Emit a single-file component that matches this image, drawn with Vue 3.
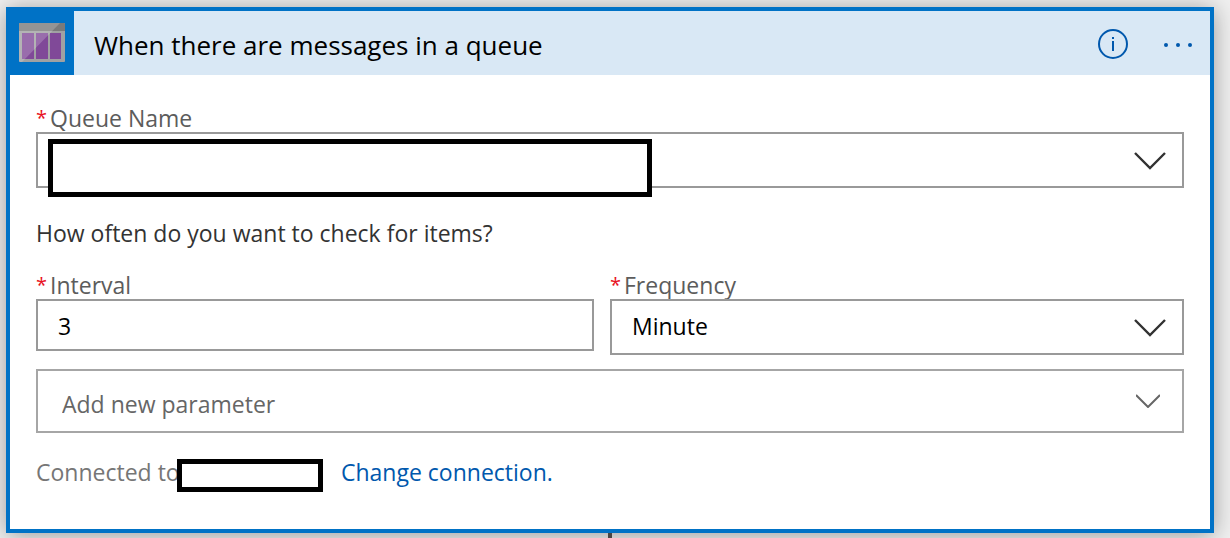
<script setup>
import { ref } from 'vue'

const queue = ref('')
const interval = ref('3')
const frequency = ref('Minute')
const parameter = ref('')
const frequencies = ['Month', 'Week', 'Day', 'Hour', 'Minute', 'Second']
</script>

<template>
  <main class="canvas">
    <section class="card">
      <header class="head">
        <div class="tile">
          <svg width="46" height="40" viewBox="0 0 46 40" aria-hidden="true">
            <rect width="46" height="39" rx="1" fill="#a0a1a2" />
            <path d="M0 1Q0 0 1 0H45Q46 0 46 1V8H0z" fill="#7a7a7a" />
            <path d="M3 10h12v26H3zM17 10h12v26H17zM31 10h11v26H31z" fill="#804998" />
            <path d="M0 1Q0 0 1 0H41L3 39H1Q0 39 0 38z" fill="#fff" fill-opacity=".2" />
          </svg>
        </div>
        <h1>When there are messages in a queue</h1>
        <button class="icon-btn" type="button" aria-label="Information">
          <svg width="30" height="30" viewBox="0 0 30 30" aria-hidden="true">
            <circle cx="15" cy="15" r="14" fill="none" stroke="#0058ad" stroke-width="2" />
            <path d="M14 8h2v2h-2zM14 12h2v10h-2z" fill="#0058ad" />
          </svg>
        </button>
        <button class="icon-btn" type="button" aria-label="More commands">
          <svg width="30" height="30" viewBox="0 0 30 30" aria-hidden="true">
            <g fill="#0058ad">
              <circle cx="2" cy="16" r="2" />
              <circle cx="14" cy="16" r="2" />
              <circle cx="26" cy="16" r="2" />
            </g>
          </svg>
        </button>
      </header>

      <form class="body" @submit.prevent>
        <div class="field">
          <label for="queue"><span class="star">*</span>Queue Name</label>
          <div class="picker">
            <select id="queue" v-model="queue"><option value=""></option></select>
            <svg class="chevron" width="32" height="18" viewBox="0 0 32 18" aria-hidden="true">
              <path d="M1 1L16 16L31 1" fill="none" stroke="#323232" stroke-width="2.4" />
            </svg>
            <span class="mask mask-queue"></span>
          </div>
        </div>

        <p class="question">How often do you want to check for items?</p>

        <div class="row">
          <div class="field">
            <label for="interval"><span class="star">*</span>Interval</label>
            <input id="interval" v-model="interval" type="text" />
          </div>
          <div class="field">
            <label for="frequency"><span class="star">*</span>Frequency</label>
            <div class="picker">
              <select id="frequency" v-model="frequency">
                <option v-for="f in frequencies" :key="f">{{ f }}</option>
              </select>
              <svg class="chevron" width="32" height="18" viewBox="0 0 32 18" aria-hidden="true">
                <path d="M1 1L16 16L31 1" fill="none" stroke="#323232" stroke-width="2.4" />
              </svg>
            </div>
          </div>
        </div>

        <div class="picker add">
          <select v-model="parameter" aria-label="Add new parameter">
            <option value="">Add new parameter</option>
          </select>
          <svg class="chevron" width="24" height="14" viewBox="0 0 24 14" aria-hidden="true">
            <path d="M0 1L12 13L24 1" fill="none" stroke="#666" stroke-width="2" />
          </svg>
        </div>

        <div class="connection">
          <span class="connected">Connected to</span>
          <span class="mask mask-account"></span>
          <a href="#">Change connection.</a>
        </div>
      </form>
    </section>
    <div class="connector"></div>
  </main>
</template>

<style>
body {
  background: #f0f0f0;
  overflow: hidden;
}
</style>

<style scoped>
.canvas {
  box-sizing: border-box;
  height: 100vh;
  overflow: hidden;
  padding: 7px 16px 0 6px;
  font-family: "Open Sans", "Noto Sans", sans-serif;
  font-size: 23px;
  line-height: 32px;
}
.card {
  border: 4px solid #0072c6;
  background: #fff;
  box-shadow: 0 2px 22px rgba(0, 0, 0, .36);
}
.head {
  display: flex;
  align-items: center;
  height: 64px;
  padding-right: 16px;
  background: #d9e8f5;
}
.tile {
  display: flex;
  align-items: center;
  align-self: stretch;
  box-sizing: border-box;
  width: 64px;
  padding-left: 9px;
  background: #0072c6;
}
h1 {
  flex: 1;
  margin: 0;
  padding: 4px 0 0 20px;
  font-size: 26px;
  font-weight: 400;
  color: #000;
}
.icon-btn {
  display: flex;
  margin-left: 36px;
  padding: 2px 0 0;
  border: 0;
  background: none;
}
.body {
  padding: 27px 26px 37px;
}
.field {
  display: flex;
  flex-direction: column;
  min-width: 0;
}
label {
  height: 30px;
  color: #5c5c5c;
}
.star {
  display: inline-block;
  width: 14px;
  font-size: 20px;
  line-height: 24px;
  vertical-align: 2px;
  color: #e81123;
}
.picker {
  position: relative;
  display: grid;
  align-items: center;
}
.picker > select,
.picker > .chevron {
  grid-area: 1 / 1;
}
select,
input {
  box-sizing: border-box;
  width: 100%;
  margin: 0;
  padding: 0 20px;
  border: 2px solid #999;
  border-radius: 0;
  background: #fff;
  color: #000;
  font: inherit;
}
select {
  height: 56px;
  padding-bottom: 2px;
  appearance: none;
}
input {
  height: 52px;
  padding-top: 2px;
}
.chevron {
  justify-self: end;
  margin: 2px 18px 0 0;
  pointer-events: none;
}
.mask {
  box-sizing: border-box;
  border: 5px solid #000;
  background: #fff;
}
.mask-queue {
  position: absolute;
  top: 7px;
  left: 12px;
  width: 604px;
  height: 58px;
}
.question {
  margin: 29px 0 20px;
  color: #333;
}
.row {
  display: grid;
  grid-template-columns: 558fr 574fr;
  align-items: start;
  gap: 16px;
}
.add {
  margin-top: 14px;
}
.add select {
  height: 64px;
  padding: 6px 24px 0;
  border-color: #a6a6a6;
  color: #666;
}
.add .chevron {
  margin: 0 24px 0 0;
}
.connection {
  display: flex;
  align-items: flex-start;
  margin-top: 23px;
}
.connected {
  width: 141px;
  white-space: nowrap;
  color: #767676;
}
.mask-account {
  position: relative;
  width: 146px;
  height: 33px;
  margin: 3px 18px 0 0;
}
a {
  color: #0058ad;
  text-decoration: none;
}
.connector {
  width: 4px;
  height: 24px;
  margin: 0 auto;
  background: #484644;
}
</style>
